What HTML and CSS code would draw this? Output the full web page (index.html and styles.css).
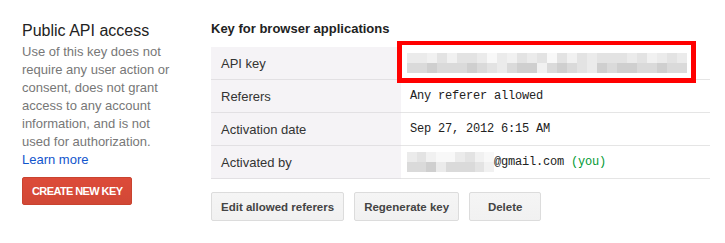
FILE: index.html
```html
<!DOCTYPE html>
<html lang="en">
<head>
    <meta charset="UTF-8">
    <title>API Access</title>
    <link rel="stylesheet" href="styles.css">
</head>
<body>
    <div class="page">
        <div class="intro">
            <h2>Public API access</h2>
            <p>Use of this key does not require any user action or consent, does not grant access to any account information, and is not used for authorization.<br><a href="#">Learn more</a></p>
            <button class="create-btn">CREATE NEW KEY</button>
        </div>

        <div class="key-panel">
            <h3>Key for browser applications</h3>
            <div class="key-table-wrap">
                <table class="key-table">
                    <tr>
                        <th>API key</th>
                        <td>
                            <span class="blur blur-key">
                                <i class="b"></i><i class="b"></i><i class="a"></i><i class="c"></i><i class="a"></i><i class="c"></i><i class="c"></i><i class="b"></i><i class="w"></i><i class="b"></i><i class="a"></i><i class="c"></i><i class="b"></i><i class="c"></i><i class="w"></i><i class="c"></i><i class="a"></i><i class="c"></i><i class="b"></i><i class="c"></i><i class="c"></i><i class="c"></i><i class="b"></i><i class="c"></i><i class="a"></i><i class="b"></i><i class="c"></i><i class="b"></i>
                                <i class="d"></i><i class="d"></i><i class="e"></i><i class="d"></i><i class="d"></i><i class="d"></i><i class="e"></i><i class="d"></i><i class="c"></i><i class="b"></i><i class="d"></i><i class="e"></i><i class="e"></i><i class="a"></i><i class="d"></i><i class="e"></i><i class="d"></i><i class="c"></i><i class="b"></i><i class="e"></i><i class="d"></i><i class="e"></i><i class="e"></i><i class="d"></i><i class="d"></i><i class="e"></i><i class="d"></i><i class="d"></i>
                            </span>
                        </td>
                    </tr>
                    <tr>
                        <th>Referers</th>
                        <td class="mono">Any referer allowed</td>
                    </tr>
                    <tr>
                        <th>Activation date</th>
                        <td class="mono">Sep 27, 2012 6:15 AM</td>
                    </tr>
                    <tr>
                        <th>Activated by</th>
                        <td class="mono">
                            <span class="blur blur-mail">
                                <i class="b"></i><i class="c"></i><i class="a"></i><i class="w"></i><i class="w"></i><i class="b"></i><i class="c"></i><i class="a"></i><i class="w"></i>
                                <i class="d"></i><i class="d"></i><i class="e"></i><i class="b"></i><i class="d"></i><i class="d"></i><i class="d"></i><i class="c"></i><i class="a"></i>
                            </span>@gmail.com <span class="you">(you)</span>
                        </td>
                    </tr>
                </table>
                <div class="highlight"></div>
            </div>
            <div class="actions">
                <button class="btn">Edit allowed referers</button>
                <button class="btn">Regenerate key</button>
                <button class="btn btn-delete">Delete</button>
            </div>
        </div>
    </div>
</body>
</html>
```

FILE: styles.css
```css
body {
    margin: 0;
    background-color: #fff;
    font-family: "Liberation Sans", Arial, sans-serif;
    color: #222;
}

.page {
    display: flex;
    gap: 37px;
    padding: 21px 15px 0 22px;
}

/* left column */
.intro {
    width: 152px;
    flex-shrink: 0;
}

.intro h2 {
    margin: 0 0 2px;
    font-size: 16px;
    font-weight: normal;
    line-height: 20px;
    color: #222;
}

.intro p {
    margin: 0;
    font-size: 13px;
    line-height: 18px;
    color: #777;
}

.intro a {
    color: #15c;
    text-decoration: none;
}

.create-btn {
    display: block;
    margin-top: 8px;
    height: 28px;
    padding: 0 9px;
    border: 1px solid #c9432f;
    border-radius: 2px;
    background: linear-gradient(#dd4b39, #d14836);
    color: #fff;
    font-family: inherit;
    font-size: 11px;
    font-weight: bold;
    letter-spacing: -0.6px;
}

/* right column */
.key-panel {
    flex: 1;
}

.key-panel h3 {
    margin: 0 0 10px;
    font-size: 13px;
    line-height: 16px;
    color: #222;
}

.key-table-wrap {
    position: relative;
}

.key-table {
    width: 100%;
    border-collapse: collapse;
    font-size: 13px;
}

.key-table th,
.key-table td {
    height: 32px;
    padding: 0 9px;
    border-bottom: 1px solid #e5e5e5;
    text-align: left;
    vertical-align: middle;
}

.key-table th {
    width: 171px;
    padding-left: 10px;
    background-color: #f5f3f6;
    border-bottom-color: #e2e0e3;
    font-weight: normal;
    color: #333;
}

.mono {
    font-family: "Liberation Mono", "Courier New", monospace;
    font-size: 12px;
    letter-spacing: -0.2px;
    color: #222;
}

.you {
    color: #093;
}

/* pixelated blocks over private values */
.blur {
    display: inline-grid;
    grid-template-rows: 10px 10px;
    vertical-align: middle;
    margin-left: -3px;
}

.blur-key {
    grid-template-columns: repeat(28, 10px);
}

.blur-mail {
    grid-template-columns: repeat(9, 1fr);
    width: 87px;
}

.blur i { display: block; }
.blur .w { background-color: #f8f8f8; }
.blur .a { background-color: #f1f1f1; }
.blur .b { background-color: #ebebeb; }
.blur .c { background-color: #e3e3e3; }
.blur .d { background-color: #dadada; }
.blur .e { background-color: #cfcfcf; }

.highlight {
    position: absolute;
    left: 186px;
    top: -6px;
    width: 299px;
    height: 42px;
    box-sizing: border-box;
    border: 5px solid #f00;
    border-top-width: 4px;
}

.actions {
    display: flex;
    gap: 10px;
    margin-top: 13px;
}

.btn {
    height: 29px;
    min-width: 72px;
    padding: 0 9px;
    border: 1px solid #dcdcdc;
    border-radius: 2px;
    background: linear-gradient(#f5f5f5, #f1f1f1);
    color: #444;
    font-family: inherit;
    font-size: 11.5px;
    font-weight: bold;
}
```
